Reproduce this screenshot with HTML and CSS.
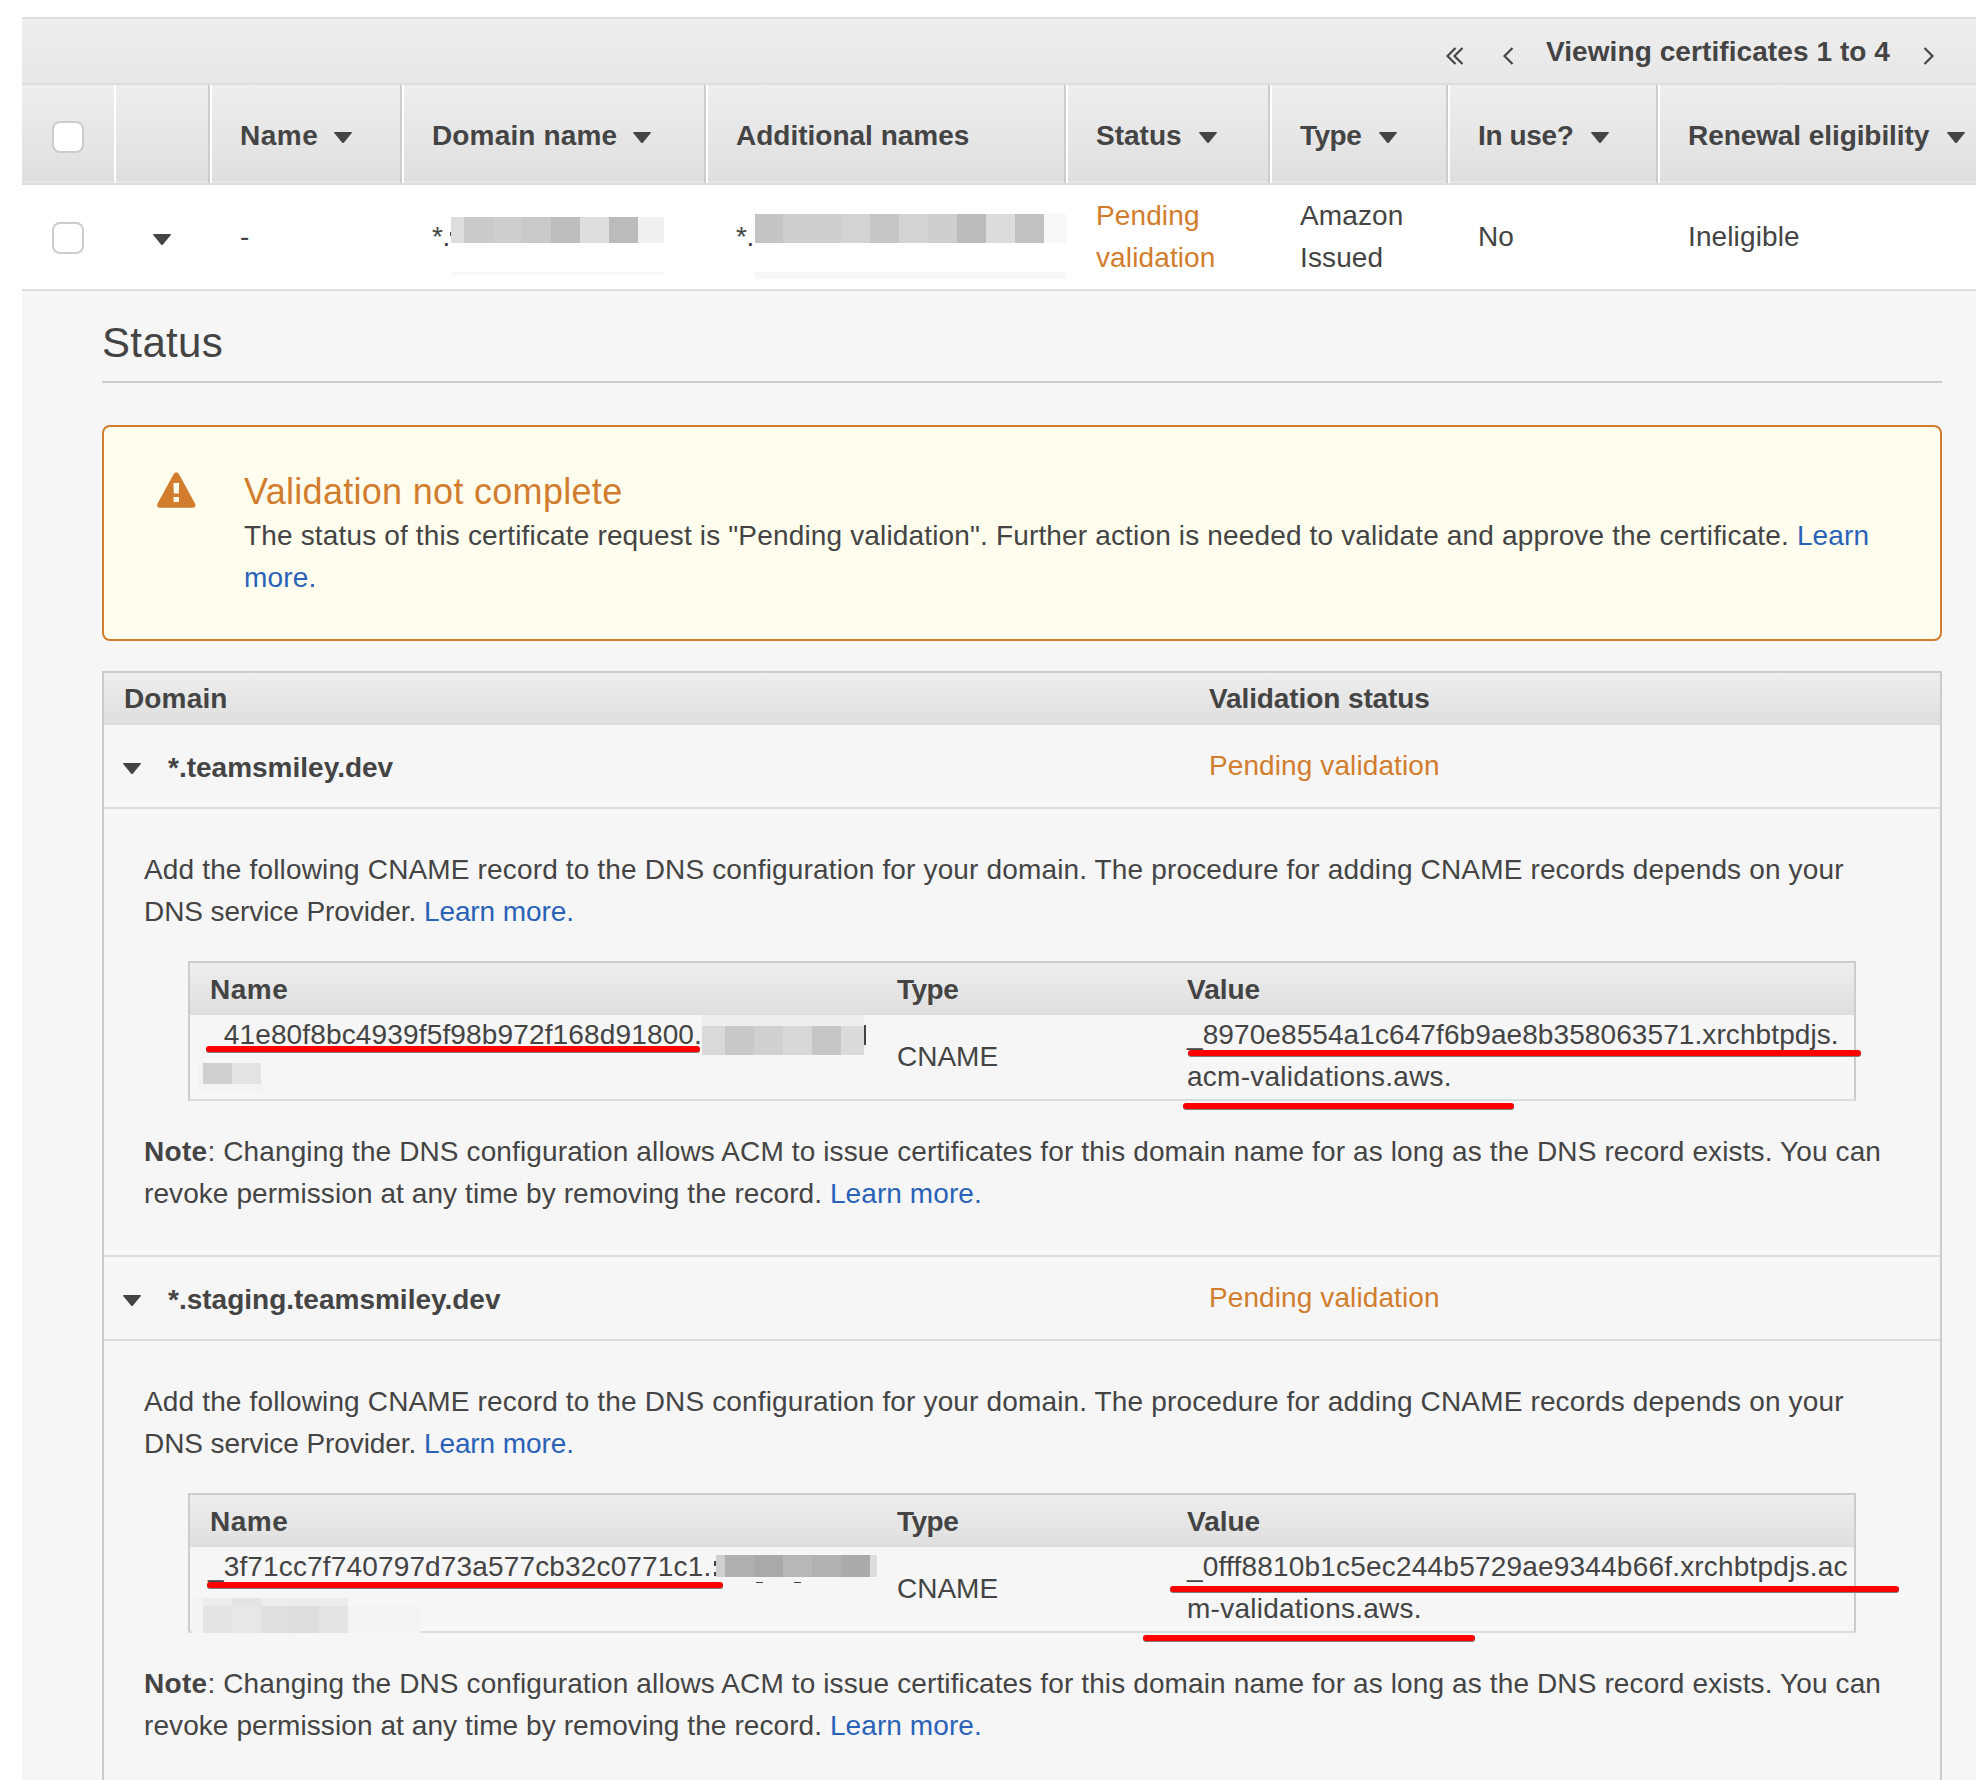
FILE: index.html
```html
<!DOCTYPE html>
<html lang="en">
<head>
<meta charset="utf-8">
<title>Certificates</title>
<link rel="stylesheet" href="styles.css">
</head>
<body>
<svg class="defs" width="0" height="0" aria-hidden="true">
  <symbol id="caret" viewBox="0 0 18 11"><path d="M0 0.8Q0 0 0.8 0H17.2Q18 0 18 0.8L10 10.4Q9 11.4 8 10.4Z"/></symbol>
</svg>
<main class="console">
  <nav class="pager">
    <svg class="chev" width="18" height="20" viewBox="0 0 18 20"><path d="M9.5 2L1.5 10L9.5 18M16.5 2L8.5 10L16.5 18"/></svg>
    <svg class="chev prev" width="11" height="20" viewBox="0 0 11 20"><path d="M9.5 2L1.5 10L9.5 18"/></svg>
    <span class="pager-text">Viewing certificates 1 to 4</span>
    <svg class="chev next" width="11" height="20" viewBox="0 0 11 20"><path d="M1.5 2L9.5 10L1.5 18"/></svg>
    <svg class="chev last" width="18" height="20" viewBox="0 0 18 20"><path d="M1.5 2L9.5 10L1.5 18M8.5 2L16.5 10L8.5 18"/></svg>
  </nav>
  <div class="row head">
    <div class="cell check"><span class="box"></span></div>
    <div class="cell toggle"></div>
    <div class="cell"><span class="wide">Name</span><svg class="caret"><use href="#caret"/></svg></div>
    <div class="cell"><span class="semi">Domain name</span><svg class="caret"><use href="#caret"/></svg></div>
    <div class="cell"><span>Additional names</span></div>
    <div class="cell"><span>Status</span><svg class="caret"><use href="#caret"/></svg></div>
    <div class="cell"><span class="tight">Type</span><svg class="caret"><use href="#caret"/></svg></div>
    <div class="cell"><span class="snug">In use?</span><svg class="caret"><use href="#caret"/></svg></div>
    <div class="cell"><span class="snug2">Renewal eligibility</span><svg class="caret"><use href="#caret"/></svg></div>
  </div>
  <div class="row item">
    <div class="cell check"><span class="box"></span></div>
    <div class="cell toggle"><svg class="caret"><use href="#caret"/></svg></div>
    <div class="cell">-</div>
    <div class="cell masked">*.</div>
    <div class="cell masked">*.</div>
    <div class="cell pending">Pending<br>validation</div>
    <div class="cell">Amazon<br>Issued</div>
    <div class="cell">No</div>
    <div class="cell">Ineligible</div>
  </div>
  <section class="details">
    <h2>Status</h2>
    <div class="alert">
      <svg class="warn" width="39" height="36" viewBox="0 0 39 36"><path class="tri" d="M16.7 1.9Q19.3 -1.4 21.9 1.9L38 31.6Q39.4 35.6 35.6 35.8H3Q-0.8 35.6 0.6 31.6Z"/><path class="bang" d="M16.4 11H22.2L21.8 21.6H16.8ZM16.6 25H22V30H16.6Z"/></svg>
      <div>
        <h3>Validation not complete</h3>
        <p>The status of this certificate request is "Pending validation". Further action is needed to validate and approve the certificate. <a>Learn<br>more.</a></p>
      </div>
    </div>
    <div class="domains">
      <div class="bar domain-cols"><span class="semi">Domain</span><span>Validation status</span></div>
      <div class="domain domain-cols">
        <div class="domain-name"><svg class="caret"><use href="#caret"/></svg><b>*.teamsmiley.dev</b></div>
        <span class="pending">Pending validation</span>
      </div>
      <div class="body">
        <p>Add the following CNAME record to the DNS configuration for your domain. The procedure for adding CNAME records depends on your<br><span class="flat">DNS service Provider. <a>Learn more.</a></span></p>
        <div class="records">
          <div class="bar record-cols"><span class="wide">Name</span><span class="tight">Type</span><span>Value</span></div>
          <div class="record record-cols">
            <span class="top">_41e80f8bc4939f5f98b972f168d91800.</span>
            <span class="type">CNAME</span>
            <span class="value"><span class="fit-a">_8970e8554a1c647f6b9ae8b358063571.xrchbtpdjs.</span><br>acm-validations.aws.</span>
          </div>
        </div>
        <p class="note"><b>Note</b>: Changing the DNS configuration allows ACM to issue certificates for this domain name for as long as the DNS record exists. You can<br><span class="fit-a">revoke permission at any time by removing the record. <a>Learn more.</a></span></p>
      </div>
      <div class="domain domain-cols">
        <div class="domain-name"><svg class="caret"><use href="#caret"/></svg><b>*.staging.teamsmiley.dev</b></div>
        <span class="pending">Pending validation</span>
      </div>
      <div class="body">
        <p>Add the following CNAME record to the DNS configuration for your domain. The procedure for adding CNAME records depends on your<br><span class="flat">DNS service Provider. <a>Learn more.</a></span></p>
        <div class="records">
          <div class="bar record-cols"><span class="wide">Name</span><span class="tight">Type</span><span>Value</span></div>
          <div class="record record-cols">
            <span class="top">_3f71cc7f740797d73a577cb32c0771c1.</span>
            <span class="type">CNAME</span>
            <span class="value"><span class="fit-b">_0fff8810b1c5ec244b5729ae9344b66f.xrchbtpdjs.ac</span><br>m-validations.aws.</span>
          </div>
        </div>
        <p class="note"><b>Note</b>: Changing the DNS configuration allows ACM to issue certificates for this domain name for as long as the DNS record exists. You can<br><span class="fit-a">revoke permission at any time by removing the record. <a>Learn more.</a></span></p>
      </div>
    </div>
  </section>
</main>
<!-- redaction mosaics and red underline annotations drawn over the page -->
<svg class="markup" width="1976" height="1780" viewBox="0 0 1976 1780">
  <g shape-rendering="crispEdges">
    <path fill="#444" d="M450 232h2v4h-2z"/>
    <path fill="#dddddd" d="M451 217h13v26h-13z"/><path fill="#cacaca" d="M464 217h29v26h-29z"/><path fill="#cecece" d="M493 217h29v26h-29z"/><path fill="#c9c9c9" d="M522 217h29v26h-29z"/><path fill="#bdbdbd" d="M551 217h29v26h-29z"/><path fill="#dedede" d="M580 217h29v26h-29z"/><path fill="#bbbbbb" d="M609 217h29v26h-29z"/><path fill="#f0f0f0" d="M638 217h26v26h-26z"/>
    <path fill="#f7f7f7" d="M451 272h213v3H451zM755 272h311v7H755z"/>
    <path fill="#c4c4c4" d="M755 214h28v29h-28z"/><path fill="#cecece" d="M783 214h58v29h-58z"/><path fill="#d3d3d3" d="M841 214h29v29h-29z"/><path fill="#c6c6c6" d="M870 214h29v29h-29z"/><path fill="#d3d3d3" d="M899 214h29v29h-29z"/><path fill="#cecece" d="M928 214h29v29h-29z"/><path fill="#bcbcbc" d="M957 214h29v29h-29z"/><path fill="#dcdcdc" d="M986 214h29v29h-29z"/><path fill="#c1c1c1" d="M1015 214h29v29h-29z"/><path fill="#f7f7f7" d="M1044 214h22v29h-22z"/>

    <path fill="#eeeeee" d="M702 1015h162v11H702z"/><path fill="#d9d9d9" d="M702 1026h23v29h-23z"/><path fill="#c8c8c8" d="M725 1026h29v29h-29z"/><path fill="#d0d0d0" d="M754 1026h29v29h-29z"/><path fill="#d8d8d8" d="M783 1026h29v29h-29z"/><path fill="#c6c6c6" d="M812 1026h29v29h-29z"/><path fill="#dadada" d="M841 1026h23v29h-23z"/>
    <path fill="#444" d="M864 1025h2v20h-2z"/>
    <path fill="#f3f3f3" d="M702 1084h162v2H702zM198 1063h5v28h-5zM198 1084h65v7h-65z"/>
    <path fill="#d0d0d0" d="M203 1063h29v21h-29z"/><path fill="#e3e3e3" d="M232 1063h29v21h-29z"/>

    <path fill="#444" d="M756 1582h7v1h-7zM794 1582h7v1h-7zM714 1561h2v5h-2zM714 1572h2v4h-2z"/>
    <path fill="#cfcfcf" d="M716 1555h9v22h-9z"/><path fill="#b0b0b0" d="M725 1555h29v22h-29z"/><path fill="#a9a9a9" d="M754 1555h29v22h-29z"/><path fill="#b7b7b7" d="M783 1555h29v22h-29z"/><path fill="#b1b1b1" d="M812 1555h29v22h-29z"/><path fill="#aaaaaa" d="M841 1555h29v22h-29z"/><path fill="#dddddd" d="M870 1555h7v22h-7z"/>
    <path fill="#f3f3f3" d="M192 1598h11v35h-11zM348 1606h73v27h-73z"/>
    <path fill="#ececec" d="M203 1598h29v8h-29zM261 1598h87v8h-87z"/><path fill="#e4e4e4" d="M232 1598h29v8h-29zM203 1606h29v27h-29z"/><path fill="#e7e7e7" d="M232 1606h29v27h-29z"/><path fill="#dfdfdf" d="M261 1606h29v27h-29z"/><path fill="#dddddd" d="M290 1606h29v27h-29z"/><path fill="#e3e3e3" d="M319 1606h29v27h-29z"/>
  </g>
  <g class="shade">
    <rect x="206" y="1047" width="494" height="6" rx="3"/><rect x="1188" y="1051" width="673" height="6" rx="3"/><rect x="1183" y="1104" width="331" height="6" rx="3"/>
    <rect x="207" y="1583" width="516" height="6" rx="3"/><rect x="1170" y="1587" width="729" height="6" rx="3"/><rect x="1143" y="1636" width="332" height="6" rx="3"/>
  </g>
  <g class="stroke">
    <rect x="206" y="1046" width="494" height="6" rx="3"/><rect x="1188" y="1050" width="673" height="6" rx="3"/><rect x="1183" y="1103" width="331" height="6" rx="3"/>
    <rect x="207" y="1582" width="516" height="6" rx="3"/><rect x="1170" y="1586" width="729" height="6" rx="3"/><rect x="1143" y="1635" width="332" height="6" rx="3"/>
  </g>
</svg>
</body>
</html>
```
FILE: styles.css
```css
* { box-sizing: border-box; }
html, body { margin: 0; height: 1780px; overflow: hidden; }
body {
  position: relative;
  background: #fff;
  color: #444;
  font: 28px/42px "Liberation Sans", Arial, sans-serif;
}
.defs { position: absolute; }
h2, h3, p { margin: 0; font-weight: normal; }
a { color: #2a62b8; text-decoration: none; }
.pending { color: #d27d2d; }

/* letter fitting */
.wide { letter-spacing: 0.5px; }
.semi { letter-spacing: 0.15px; }
.tight { letter-spacing: -0.5px; }
.snug { letter-spacing: -0.35px; }
.snug2 { letter-spacing: -0.08px; }
.flat { letter-spacing: -0.08px; }
.fit-a { letter-spacing: 0.08px; }

.console { margin: 17px 0 0 22px; height: 1763px; overflow: hidden; background: #f6f6f6; }

.pager {
  display: flex;
  align-items: center;
  height: 68px;
  padding-left: 1424px;
  border-top: 2px solid #ddd;
  border-bottom: 2px solid #ddd;
  background: linear-gradient(#eee, #e7e7e7);
  font-weight: bold;
  white-space: nowrap;
}
.pager-text { margin-left: 32px; margin-top: 2px; flex: none; width: 346px; letter-spacing: 0.08px; }
.chev { flex: none; margin-top: 10px; fill: none; stroke: #444; stroke-width: 2.2; }
.prev { margin-left: 39px; }
.next { margin-left: 31px; }
.last { margin-left: 41px; }

.row {
  display: grid;
  grid-template-columns: 92px 96px 192px 304px 360px 204px 178px 210px 340px;
}
.cell { display: flex; align-items: center; padding-left: 28px; white-space: nowrap; }
.head {
  height: 100px;
  border-bottom: 2px solid #ddd;
  background: linear-gradient(#e6e6e6, #e6e6e6) bottom / 100% 2px no-repeat, linear-gradient(#eee, #dfdfdf);
  font-weight: bold;
}
.head .cell { border-left: 2px solid #fff; border-right: 2px solid #ccc; padding-top: 3px; }
.head .check { border-left: 0; border-right: 0; }
.head .toggle { border-left: 2px solid #fff; }
.head .caret { margin-left: 17px; margin-top: 3px; }
.head .wide + .caret, .head .semi + .caret { margin-left: 16px; }
.head .snug2 + .caret, .head .tight + .caret { margin-left: 18px; }
.cell.check { padding-left: 30px; }
.box { width: 32px; height: 32px; border: 2px solid #ccc; border-radius: 8px; background: #fff; margin-top: 3px; }
.item .box { margin-top: 2px; }
.caret { flex: none; width: 18px; height: 11px; fill: #444; }
.item { height: 106px; background: #fff; border-bottom: 2px solid #ddd; }
.item .cell { padding-left: 30px; letter-spacing: 0.12px; }
.item .masked { letter-spacing: -0.5px; }
.item .toggle { padding: 5px 0 0 39px; }

.details { padding: 27px 34px 0 80px; }
h2 { height: 65px; padding-top: 1px; border-bottom: 2px solid #ccc; font-size: 42px; line-height: 48px; letter-spacing: 0.35px; }
.alert {
  display: flex;
  gap: 48px;
  height: 216px;
  margin-top: 42px;
  padding: 45px 0 0 53px;
  border: 2px solid #d27d2d;
  border-radius: 8px;
  background: #fffded;
  white-space: nowrap;
}
.warn { flex: none; }
.tri { fill: #d27d2d; }
.bang { fill: #fffded; }
h3 { margin-top: -2px; color: #d27d2d; font-size: 36px; line-height: 43px; letter-spacing: 0.3px; }
.alert p { margin-top: 2px; letter-spacing: 0.155px; }

.domains { margin-top: 30px; border: 2px solid #ccc; height: 1300px; white-space: nowrap; }
.bar { background: linear-gradient(#eee, #dfdfdf); border-bottom: 2px solid #ddd; font-weight: bold; }
.domain-cols { display: grid; grid-template-columns: 1086px 1fr; padding-left: 19px; }
.bar.domain-cols { grid-template-columns: 1085px 1fr; height: 52px; padding: 5px 0 0 20px; letter-spacing: -0.1px; }
.domain { height: 84px; padding-top: 20px; border-bottom: 2px solid #ddd; }
.domain .pending { letter-spacing: 0.1px; }
.domain-name { display: flex; align-items: center; gap: 27px; height: 46px; }
.domain-name .caret { margin-top: 1px; }
.body { height: 448px; padding: 40px 0 0 40px; border-bottom: 2px solid #ddd; letter-spacing: 0.152px; }
.records { width: 1668px; height: 140px; margin: 28px 0 0 44px; border: 2px solid #ccc; border-bottom-color: #ddd; }
.record-cols { display: grid; grid-template-columns: 687px 290px 1fr; align-items: center; padding-left: 20px; }
.records .bar { height: 52px; padding-top: 3px; letter-spacing: 0; }
.records .bar .wide { letter-spacing: 0.5px; }
.records .bar .tight { letter-spacing: -0.5px; }
.record { height: 84px; margin-top: -1px; letter-spacing: 0.15px; }
.record .top { align-self: start; margin-left: -2px; }
.record .type { padding-top: 2px; letter-spacing: 0; }
.record .value { letter-spacing: 0.25px; }
.value .fit-a { letter-spacing: 0.09px; }
.value .fit-b { letter-spacing: 0.2px; }
.note { margin-top: 30px; letter-spacing: 0.122px; }
.note b { letter-spacing: 0.3px; }

.markup { position: absolute; left: 0; top: 0; }
.shade { fill: #7d7d7d; }
.stroke { fill: #f00; }
```
